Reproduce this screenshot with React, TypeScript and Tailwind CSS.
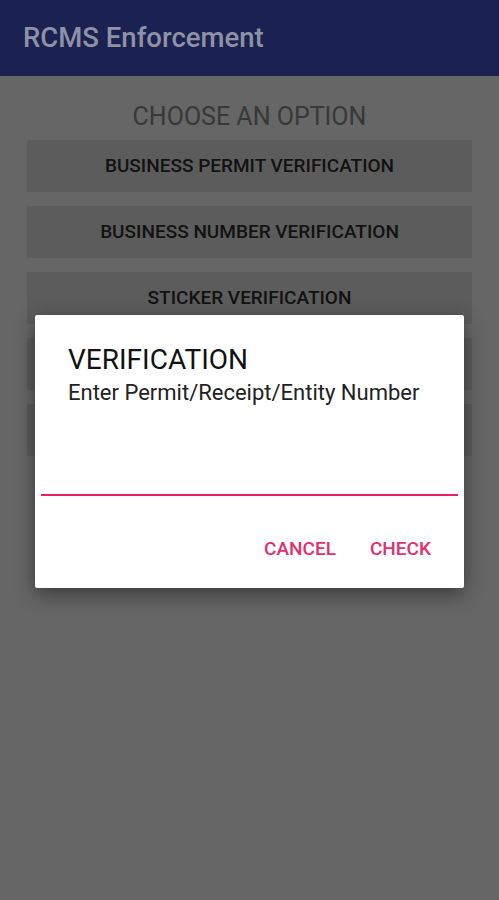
const options = [
  "BUSINESS PERMIT VERIFICATION",
  "BUSINESS NUMBER VERIFICATION",
  "STICKER VERIFICATION",
  "",
  "",
];

export default function App() {
  return (
    <div className="relative h-[900px] w-full overflow-hidden bg-[#666666] font-['Roboto',sans-serif]">
      <header className="flex h-[76px] items-center bg-[#1b2150] px-[23px]">
        <h1 className="text-[27.5px] font-medium leading-none text-[#8e92a6]">
          RCMS Enforcement
        </h1>
      </header>

      <main className="flex flex-col px-[27px] pt-[22px]">
        <p className="text-center text-[25px] leading-[38px] text-[#383838]">
          CHOOSE AN OPTION
        </p>
        <div className="mt-[4px] flex flex-col gap-[14px]">
          {options.map((o, i) => (
            <div
              key={i}
              className="flex h-[52px] items-center justify-center rounded-[2px] bg-[#5c5c5c] text-[19px] font-medium text-[#121212]"
            >
              {o}
            </div>
          ))}
        </div>
      </main>

      {/* dialog */}
      <div className="absolute left-[35px] top-[315px] flex h-[273px] w-[429px] flex-col rounded-[2px] bg-white shadow-[0_6px_20px_rgba(0,0,0,0.45)]">
        <div className="px-[33px] pt-[30px]">
          <h2 className="text-[28px] leading-[30px] text-[#121212]">VERIFICATION</h2>
          <p className="mt-[5px] text-[22px] leading-[26px] text-[#222222]">
            Enter Permit/Receipt/Entity Number
          </p>
        </div>
        <div className="mx-[6px] mt-[88px] h-[2px] bg-[#e91e63]" />
        <div className="mt-auto flex justify-end gap-[34px] pb-[28px] pr-[33px] text-[19px] font-medium leading-[22px] text-[#e0306f]">
          <button>CANCEL</button>
          <button>CHECK</button>
        </div>
      </div>
    </div>
  );
}
